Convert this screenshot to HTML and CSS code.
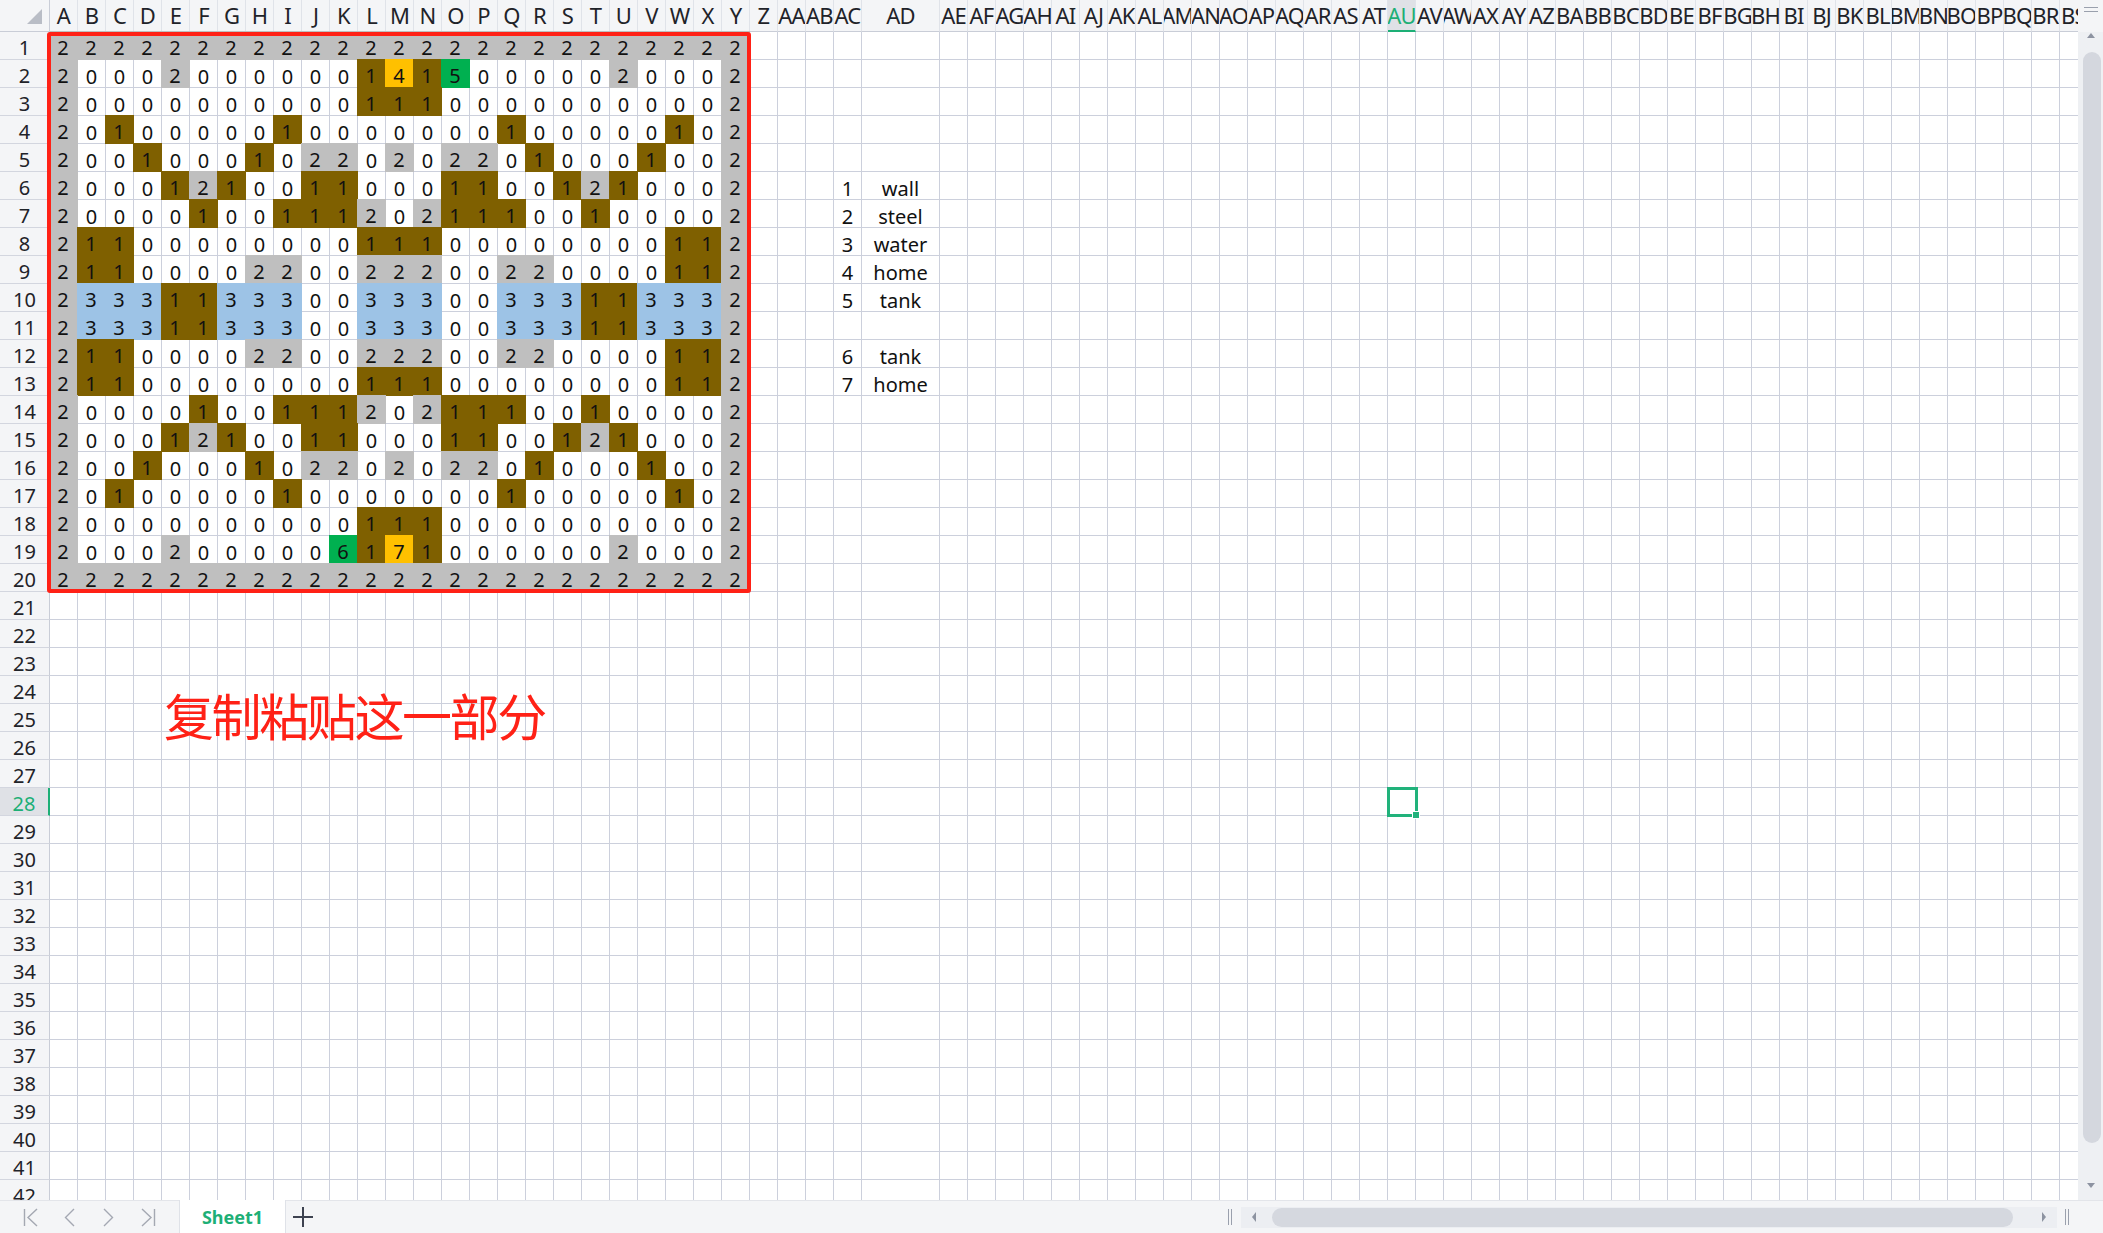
FILE: index.html
```html
<!DOCTYPE html>
<html lang="zh-CN">
<head>
<meta charset="utf-8">
<title>Sheet1</title>
<link rel="stylesheet" href="styles.css">
</head>
<body>
<div class="app">
  <div class="main">
    <div class="sheet">
      <div class="grid gridtpl" id="grid"></div>
      <div class="overlay gridtpl">
        <div class="frame"></div>
        <div class="selection"><span class="handle"></span></div>
      </div>
    </div>
    <div class="vscroll">
      <div class="vs-top"><span class="hbar"></span><span class="hbar"></span></div>
      <div class="vs-track">
        <div class="vs-up"><span class="tri-up"></span></div>
        <div class="vs-thumb"></div>
        <div class="vs-down"><span class="tri-down"></span></div>
      </div>
    </div>
  </div>
  <div class="tabbar">
    <div class="navs">
      <div class="nav"><svg width="16" height="19" viewBox="0 0 16 19"><path d="M1.5 1V18M14 1L5 9.5L14 18" fill="none" stroke="#a4a8b2" stroke-width="1.4"/></svg></div>
      <div class="nav"><svg width="11" height="19" viewBox="0 0 11 19"><path d="M10 1L1.5 9.5L10 18" fill="none" stroke="#a4a8b2" stroke-width="1.4"/></svg></div>
      <div class="nav"><svg width="11" height="19" viewBox="0 0 11 19"><path d="M1 1L9.5 9.5L1 18" fill="none" stroke="#a4a8b2" stroke-width="1.4"/></svg></div>
      <div class="nav"><svg width="16" height="19" viewBox="0 0 16 19"><path d="M2 1L11 9.5L2 18M14.5 1V18" fill="none" stroke="#a4a8b2" stroke-width="1.4"/></svg></div>
    </div>
    <div class="tab">Sheet1</div>
    <div class="add"><svg width="20" height="20" viewBox="0 0 20 20"><path d="M10 0V20M0 10H20" fill="none" stroke="#3d4250" stroke-width="2"/></svg></div>
    <div class="hs-area">
      <span class="split-v"></span>
      <div class="hs-track">
        <span class="tri-left"></span>
        <div class="hs-thumb"></div>
        <span class="tri-right"></span>
      </div>
      <span class="split-v"></span>
    </div>
  </div>
</div>
<script src="app.js"></script>
</body>
</html>
```

FILE: styles.css
```css
* { box-sizing: border-box; }
html, body { margin: 0; padding: 0; }
body {
  width: 2103px;
  height: 1233px;
  overflow: hidden;
  background: #fff;
  font-family: "Noto Sans", "Noto Sans CJK SC", sans-serif;
  color: #1f2329;
}
.app { display: flex; flex-direction: column; width: 2103px; height: 1233px; }
.main { display: flex; height: 1200px; }

.sheet { flex: 1; min-width: 0; position: relative; overflow: hidden; background: #fff; }
.gridtpl {
  display: grid;
  grid-template-columns: 50px repeat(29, 28px) 78px repeat(41, 28px);
  grid-template-rows: 32px repeat(42, 28px);
}
.overlay { position: absolute; inset: 0; pointer-events: none; }

.corner {
  position: relative;
  background: #f4f5f7;
  border-right: 1px solid #c9cdd7;
  border-bottom: 1px solid #c9cdd7;
}
.corner::after {
  content: "";
  position: absolute;
  right: 7px;
  bottom: 7px;
  width: 15px;
  height: 15px;
  background: #b9bdc6;
  clip-path: polygon(100% 0, 100% 100%, 0 100%);
}
.colhead {
  display: flex;
  justify-content: center;
  overflow: hidden;
  white-space: nowrap;
  background: #f4f5f7;
  border-right: 1px solid #e0e3e9;
  border-bottom: 1px solid #c9cdd7;
  font-size: 22px;
  line-height: 30px;
  letter-spacing: -0.8px;
  color: #1f2329;
}
.colhead.active { background: #dfe1e6; color: #1daf76; border-bottom: 2px solid #1daf76; }
.rowhead {
  background: #f4f5f7;
  border-right: 1px solid #c9cdd7;
  border-bottom: 1px solid #d3d6df;
  text-align: center;
  font-size: 20px;
  line-height: 22px;
  padding-top: 5px;
  color: #1f2329;
}
.rowhead.active { background: #dfe1e6; color: #1daf76; border-right: 2px solid #1daf76; }

.cell {
  border-right: 1px solid #ccd0dc;
  border-bottom: 1px solid #ccd0dc;
  text-align: center;
  font-size: 20px;
  line-height: 21px;
  padding-top: 6px;
  white-space: nowrap;
  color: #111;
}
.fill { margin: -1px 0 0 -1px; }
.v1 { background: #7f6000; border-color: #7f6000; }
.v2 { background: #bfbfbf; border-color: #bfbfbf; }
.v3 { background: #9dc3e6; border-color: #9dc3e6; }
.v4, .v7 { background: #ffc000; border-color: #ffc000; }
.v5, .v6 { background: #00b050; border-color: #00b050; }

.note {
  z-index: 1;
  display: flex;
  align-items: center;
  padding: 0 0 8px 2px;
  font-family: "Noto Sans CJK SC", sans-serif;
  font-size: 50px;
  line-height: 1;
  letter-spacing: -2.4px;
  color: #ff2116;
  text-align: left;
}

.frame {
  grid-column: 2 / 27;
  grid-row: 2 / 22;
  margin: 0 -1px -1px -3px;
  border: 4px solid #ff2116;
  border-radius: 3px;
}
.selection {
  grid-column: 48;
  grid-row: 29;
  margin: -1px -2px -1px -1px;
  border: 3px solid #21b27b;
  position: relative;
}
.handle {
  position: absolute;
  right: -5px;
  bottom: -5px;
  width: 8px;
  height: 8px;
  background: #21b27b;
  border: 1px solid #fff;
}

.vscroll { width: 25px; display: flex; flex-direction: column; background: #eef0f3; }
.vs-top {
  height: 32px;
  background: #f4f5f7;
  display: flex;
  flex-direction: column;
  align-items: center;
  padding-top: 7px;
  gap: 3px;
}
.hbar { width: 14px; height: 1px; background: #9aa0ad; }
.vs-track { flex: 1; display: flex; flex-direction: column; align-items: center; }
.vs-up { height: 20px; padding-top: 1px; }
.tri-up {
  display: block;
  width: 0; height: 0;
  border-left: 4.5px solid transparent;
  border-right: 4.5px solid transparent;
  border-bottom: 5px solid #8d93a1;
}
.vs-thumb { width: 18px; height: 1091px; border-radius: 9px; background: #d4d7de; margin-left: 3px; }
.vs-down { margin-top: auto; height: 30px; display: flex; align-items: center; }
.tri-down {
  display: block;
  width: 0; height: 0;
  border-left: 4.5px solid transparent;
  border-right: 4.5px solid transparent;
  border-top: 5px solid #8d93a1;
}

.tabbar {
  height: 33px;
  display: flex;
  align-items: stretch;
  background: #f4f5f7;
  border-top: 1px solid #e3e5ea;
}
.navs { display: flex; padding-left: 11px; }
.nav { width: 39px; display: flex; align-items: center; justify-content: center; }
.tab {
  margin-left: 12px;
  width: 107px;
  margin-top: -1px;
  background: #fff;
  border-left: 1px solid #dfe2e8;
  border-right: 1px solid #dfe2e8;
  display: flex;
  align-items: center;
  justify-content: center;
  color: #1daf76;
  font-weight: 700;
  font-size: 18px;
}
.add { width: 34px; display: flex; align-items: center; justify-content: center; }
.hs-area { margin-left: auto; width: 878px; display: flex; align-items: center; }
.split-v {
  width: 4px;
  height: 16px;
  border-left: 1px solid #9aa0ad;
  border-right: 1px solid #9aa0ad;
  margin: 0 3px;
}
.hs-track {
  width: 816px;
  height: 21px;
  margin: 0 5px 0 6px;
  background: #eceef2;
  display: flex;
  align-items: center;
  padding: 0 11px;
}
.tri-left {
  width: 0; height: 0;
  border-top: 5px solid transparent;
  border-bottom: 5px solid transparent;
  border-right: 4px solid #8d93a1;
}
.tri-right {
  margin-left: auto;
  width: 0; height: 0;
  border-top: 5px solid transparent;
  border-bottom: 5px solid transparent;
  border-left: 4px solid #8d93a1;
}
.hs-thumb { width: 741px; height: 19px; border-radius: 10px; background: #d5d8df; margin-left: 16px; }
```

FILE: app.js
```js
(function () {
  var rows = [
    "2222222222222222222222222",
    "2000200000014150000020002",
    "2000000000011100000000002",
    "2010000010000000100000102",
    "2001000102202022010001002",
    "2000121001100011001210002",
    "2000010011120211100100002",
    "2110000000011100000000112",
    "2110000220022200220000112",
    "2333113330033300333113332",
    "2333113330033300333113332",
    "2110000220022200220000112",
    "2110000000011100000000112",
    "2000010011120211100100002",
    "2000121001100011001210002",
    "2001000102202022010001002",
    "2010000010000000100000102",
    "2000000000011100000000002",
    "2000200000617100000020002",
    "2222222222222222222222222"
  ];
  var legend = {
    6: ["1", "wall"], 7: ["2", "steel"], 8: ["3", "water"], 9: ["4", "home"],
    10: ["5", "tank"], 12: ["6", "tank"], 13: ["7", "home"]
  };
  var NCOL = 71, NROW = 42, ACTIVE_COL = 47, ACTIVE_ROW = 28;

  function colName(n) {
    var s = "";
    while (n > 0) {
      var m = (n - 1) % 26;
      s = String.fromCharCode(65 + m) + s;
      n = Math.floor((n - 1) / 26);
    }
    return s;
  }

  var grid = document.getElementById("grid");
  var frag = document.createDocumentFragment();
  function add(cls, text) {
    var d = document.createElement("div");
    d.className = cls;
    if (text) d.textContent = text;
    frag.appendChild(d);
    return d;
  }

  add("corner");
  for (var c = 1; c <= NCOL; c++) {
    var h = add("colhead" + (c === ACTIVE_COL ? " active" : ""));
    var s = document.createElement("span");
    s.textContent = colName(c);
    h.appendChild(s);
  }
  for (var r = 1; r <= NROW; r++) {
    add("rowhead" + (r === ACTIVE_ROW ? " active" : ""), String(r));
    for (var k = 1; k <= NCOL; k++) {
      var cls = "cell", txt = "";
      if (r <= 20 && k <= 25) {
        txt = rows[r - 1].charAt(k - 1);
        if (txt !== "0") cls += " fill v" + txt;
      } else if (legend[r] && k === 29) {
        txt = legend[r][0];
      } else if (legend[r] && k === 30) {
        txt = legend[r][1];
      } else if (r === 25 && k === 5) {
        cls += " note";
        txt = "复制粘贴这一部分";
      }
      add(cls, txt);
    }
  }
  grid.appendChild(frag);
})();
```
